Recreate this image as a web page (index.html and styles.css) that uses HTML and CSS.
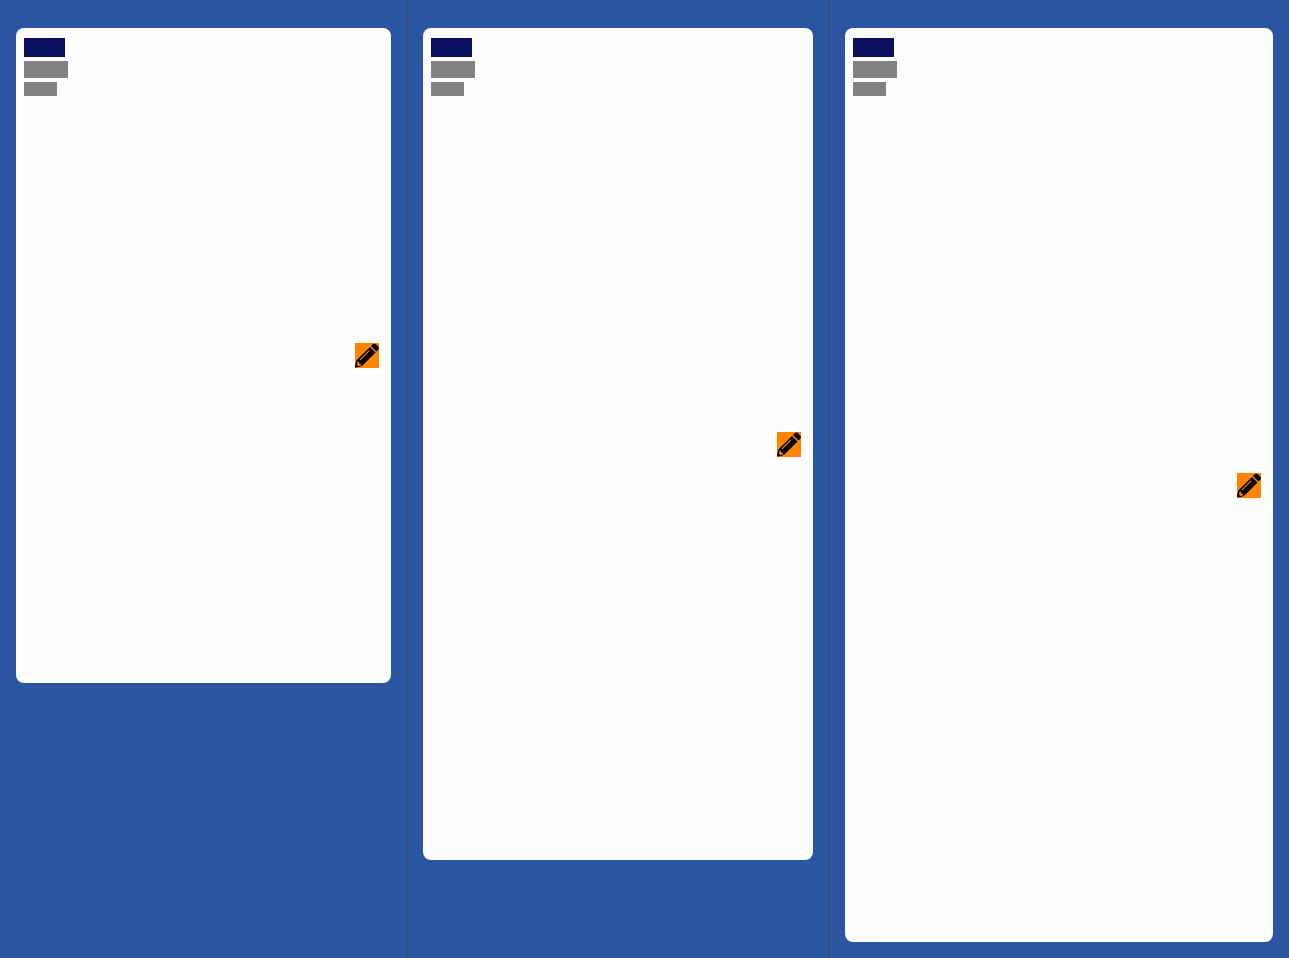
FILE: index.html
```
<!DOCTYPE html>
<html lang="en">
<head>
<meta charset="utf-8">
<meta name="viewport" content="width=device-width, initial-scale=1">
<title>Cards</title>
<link rel="stylesheet" href="styles.css">
</head>
<body>
<svg class="sprite" aria-hidden="true">
  <symbol id="pencil" viewBox="0 0 24 25">
    <path fill-rule="evenodd" d="M15 4L20.500 9.500L7.500 22.500Q4 24.500 .6 24.500Q0 24.500 0 23.800Q.3 19.500 1.800 17ZM2.600 18.200L1.900 21.400L3.400 22.900L6.300 22.200L5.700 20.900L4.200 20.600L3.900 19ZM13.800 7.200L4.600 16.400L5.400 17.200L14.600 8Z"/>
    <path d="M16 3L17.800 1.200Q19.300-.1 20.800 1.300L23.300 3.800Q24.600 5.300 23.300 6.700L21.500 8.500Z"/>
  </symbol>
</svg>
<main class="board">
  <section class="column">
    <article class="card card-short">
      <div class="summary"><div class="bar bar-title"></div><div class="bar bar-subtitle"></div><div class="bar bar-note"></div></div>
      <button class="edit" type="button" aria-label="Edit"><svg class="icon"><use href="#pencil"/></svg></button>
    </article>
  </section>
  <section class="column">
    <article class="card card-medium">
      <div class="summary"><div class="bar bar-title"></div><div class="bar bar-subtitle"></div><div class="bar bar-note"></div></div>
      <button class="edit" type="button" aria-label="Edit"><svg class="icon"><use href="#pencil"/></svg></button>
    </article>
  </section>
  <section class="column">
    <article class="card card-tall">
      <div class="summary"><div class="bar bar-title"></div><div class="bar bar-subtitle"></div><div class="bar bar-note"></div></div>
      <button class="edit" type="button" aria-label="Edit"><svg class="icon"><use href="#pencil"/></svg></button>
    </article>
  </section>
</main>
</body>
</html>
```

FILE: styles.css
```
* { box-sizing: border-box; }
body { margin: 0; background: #2b55a1; font-family: "Liberation Sans", sans-serif; }
.sprite { display: none; }
.board {
  display: grid;
  grid-template-columns: 408fr 422fr 459fr;
  min-height: 100vh;
}
.column { padding: 28px 15px 16px; border-right: 2px solid #3c4a7c; }
.column:first-child { padding-left: 16px; }
.column:last-child { padding-right: 16px; border-right: 0; }
.card {
  display: flex;
  align-items: center;
  justify-content: space-between;
  padding: 0 12px 0 8px;
  border-radius: 8px;
  background: #fdfdfd;
}
.card-short { aspect-ratio: 375 / 655; }
.card-medium { aspect-ratio: 390 / 832; }
.card-tall { aspect-ratio: 428 / 914; }
.summary {
  display: flex;
  flex-direction: column;
  align-self: flex-start;
  gap: 4px;
  padding-top: 10px;
}
.bar { background: #828282; }
.bar-title { width: 41px; height: 19px; background: #09115f; }
.bar-subtitle { width: 44px; height: 17px; }
.bar-note { width: 33px; height: 14px; }
.edit {
  display: block;
  width: 24px;
  height: 25px;
  padding: 0;
  border: 0;
  background: #ff8500;
  color: #000;
  cursor: pointer;
}
.icon { display: block; width: 100%; height: 100%; fill: currentColor; }
```
